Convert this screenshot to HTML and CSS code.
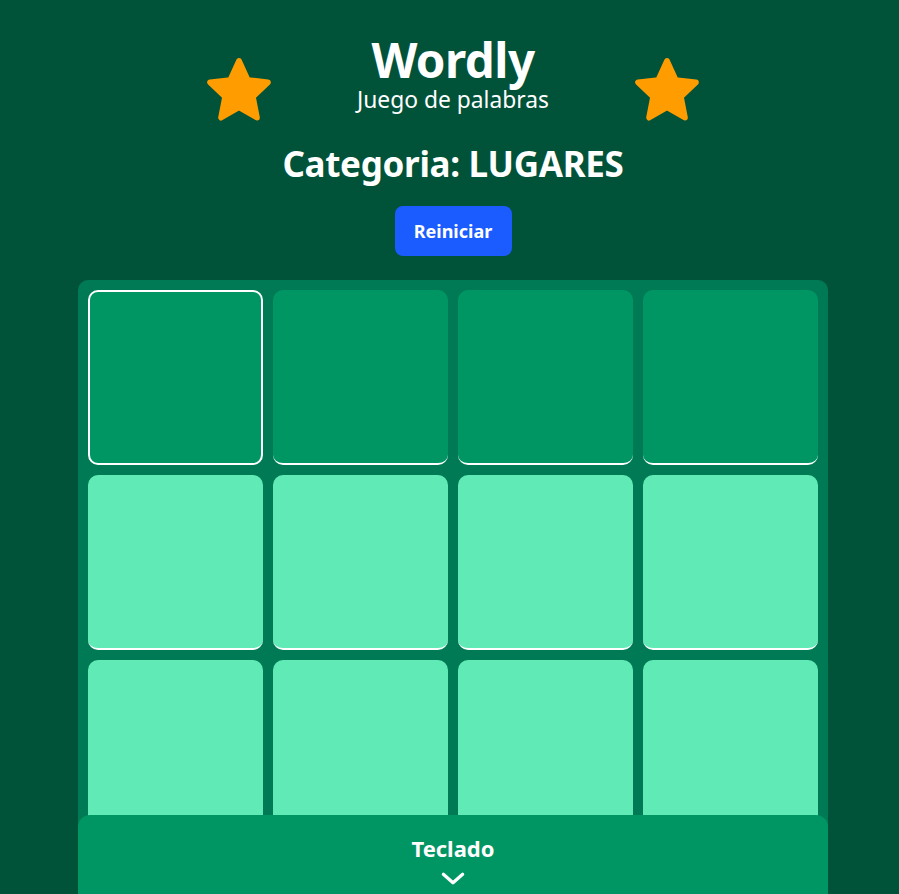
FILE: index.html
```html
<!DOCTYPE html>
<html lang="es">
<head>
<meta charset="utf-8">
<title>Wordly</title>
<link rel="stylesheet" href="styles.css">
</head>
<body>
<div class="app">
  <header class="header">
    <svg class="star" viewBox="0 0 64 64" aria-hidden="true"><path d="M32 6 L39.5 22.5 L57 24.5 L44 37 L47.5 55 L32 46 L16.5 55 L20 37 L7 24.5 L24.5 22.5 Z" fill="#ff9c00" stroke="#ff9c00" stroke-width="5" stroke-linejoin="round"/></svg>
    <div class="titles">
      <h1 class="title">Wordly</h1>
      <p class="subtitle">Juego de palabras</p>
    </div>
    <svg class="star" viewBox="0 0 64 64" aria-hidden="true"><path d="M32 6 L39.5 22.5 L57 24.5 L44 37 L47.5 55 L32 46 L16.5 55 L20 37 L7 24.5 L24.5 22.5 Z" fill="#ff9c00" stroke="#ff9c00" stroke-width="5" stroke-linejoin="round"/></svg>
  </header>
  <h2 class="category">Categoria: LUGARES</h2>
  <button class="restart">Reiniciar</button>
  <div class="board">
    <div class="tile tile--row tile--active"></div>
    <div class="tile tile--row"></div>
    <div class="tile tile--row"></div>
    <div class="tile tile--row"></div>
    <div class="tile"></div>
    <div class="tile"></div>
    <div class="tile"></div>
    <div class="tile"></div>
    <div class="tile"></div>
    <div class="tile"></div>
    <div class="tile"></div>
    <div class="tile"></div>
    <div class="tile"></div>
    <div class="tile"></div>
    <div class="tile"></div>
    <div class="tile"></div>
  </div>
  <div class="keyboard-panel">
    <span class="keyboard-label">Teclado</span>
    <svg class="chevron" viewBox="0 0 24 14" aria-hidden="true"><path d="M3 3 L12 11 L21 3" fill="none" stroke="#fff" stroke-width="3" stroke-linecap="round" stroke-linejoin="round"/></svg>
  </div>
</div>
</body>
</html>
```
FILE: styles.css
```css
html, body {
  margin: 0;
  padding: 0;
  background: #005239;
  overflow: hidden;
}
body {
  font-family: "Noto Sans", "Open Sans", "DejaVu Sans", sans-serif;
  color: #fff;
}
.app {
  margin-left: 7px;
  width: calc(100% - 7px);
  display: flex;
  flex-direction: column;
  align-items: center;
  padding-top: 34px;
}
.header {
  display: flex;
  align-items: flex-start;
  gap: 72px;
}
.star {
  width: 74px;
  height: 74px;
  margin-top: 20px;
  margin-bottom: -14px;
}
.titles {
  width: 210px;
  display: flex;
  flex-direction: column;
  align-items: center;
}
.title {
  margin: 0;
  font-size: 47.5px;
  font-weight: 700;
  line-height: 52px;
  letter-spacing: -0.5px;
}
.subtitle {
  margin: 0;
  font-size: 22.8px;
  line-height: 28px;
  white-space: nowrap;
}
.category {
  margin: 27px 0 0;
  font-size: 35px;
  font-weight: 700;
  line-height: 46px;
  letter-spacing: -0.3px;
  white-space: nowrap;
}
.restart {
  margin-top: 19px;
  width: 117px;
  height: 50px;
  border: none;
  border-radius: 8px;
  background: #1a5cff;
  color: #fff;
  font-family: inherit;
  font-size: 18px;
  font-weight: 700;
}
.board {
  margin-top: 24px;
  width: 750px;
  box-sizing: border-box;
  padding: 10px;
  background: #007a55;
  border-radius: 10px;
  display: grid;
  grid-template-columns: repeat(4, 175px);
  grid-auto-rows: 175px;
  gap: 10px;
}
.tile {
  background: #5feab6;
  border-radius: 10px;
  box-sizing: border-box;
  border-bottom: 2px solid #fff;
}
.tile--row {
  background: #009664;
}
.tile--active {
  border: 2px solid #fff;
}
.keyboard-panel {
  position: fixed;
  left: 78px;
  top: 815px;
  width: 750px;
  height: 120px;
  background: #009664;
  border-radius: 12px 12px 0 0;
  display: flex;
  flex-direction: column;
  align-items: center;
  padding-top: 18px;
  box-sizing: border-box;
}
.keyboard-label {
  font-size: 22px;
  font-weight: 700;
  line-height: 30px;
}
.chevron {
  width: 26px;
  height: 15px;
  margin-top: 8px;
}
```
